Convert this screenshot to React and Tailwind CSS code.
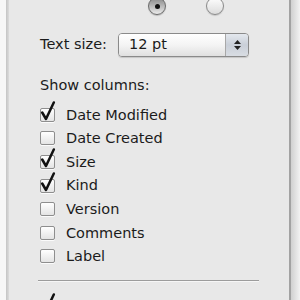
import React from "react";

const font = { fontFamily: '"DejaVu Sans", "Liberation Sans", sans-serif' };

function Check({ checked }) {
  return (
    <div className="relative w-[15px] h-[14px] shrink-0">
      <div className="absolute inset-0 rounded-[2px] border border-[#8e8e8e] bg-gradient-to-b from-[#ffffff] to-[#e4e4e4] shadow-[0_1px_0_rgba(255,255,255,0.8)]" />
      {checked && (
        <svg className="absolute left-[0px] top-[-7px]" width="18" height="22" viewBox="0 0 18 22">
          <path d="M2.2 11.5 L6 18 L13.8 1.5" fill="none" stroke="#111" strokeWidth="2.5" strokeLinejoin="round" strokeLinecap="round" />
        </svg>
      )}
    </div>
  );
}

function Row({ checked, label }) {
  return (
    <div className="flex items-center h-[23.6px] gap-[11px]">
      <Check checked={checked} />
      <span className="text-[14.5px] text-[#1b1b1b] leading-none">{label}</span>
    </div>
  );
}

export default function App() {
  const rows = [
    [true, "Date Modified"],
    [false, "Date Created"],
    [true, "Size"],
    [true, "Kind"],
    [false, "Version"],
    [false, "Comments"],
    [false, "Label"],
  ];
  return (
    <div className="w-[300px] h-[300px] overflow-hidden flex bg-[#f6f6f6]" style={font}>
      <div className="w-[6px] shrink-0 bg-[#f7f7f7]" />
      <div className="w-[3px] shrink-0 bg-gradient-to-r from-[#c4c4c4] to-[#dcdcdc]" />
      <div className="flex-1 bg-[#e8e8e8] flex flex-col pl-[31px] pr-[20px]">
        <div className="flex h-[18px] mt-[-3px] shrink-0">
          <div className="ml-[108px] w-[18px] h-[18px] rounded-full border border-[#6a6a6a] bg-gradient-to-b from-[#8a8a8a] via-[#b8b8b8] to-[#ececec] flex items-center justify-center shadow-[0_1px_1px_rgba(0,0,0,0.2)]">
            <div className="w-[5px] h-[5px] rounded-full bg-[#111]" />
          </div>
          <div className="ml-[40px] w-[18px] h-[18px] rounded-full border border-[#8a8a8a] bg-gradient-to-b from-[#fdfdfd] to-[#dcdcdc] shadow-[0_1px_1px_rgba(0,0,0,0.15)]" />
        </div>
        <div className="flex items-center mt-[18px] h-[24px] shrink-0">
          <span className="text-[14.5px] text-[#1b1b1b] w-[78px]">Text size:</span>
          <div className="flex h-[24px] w-[131px] rounded-[4px] border border-[#8a8a8a] overflow-hidden shadow-[0_1px_1px_rgba(0,0,0,0.15)]">
            <div className="flex-1 bg-gradient-to-b from-[#ffffff] via-[#f4f4f4] to-[#e0e0e0] flex items-center pl-[10px] text-[14.5px] text-[#1b1b1b]">12 pt</div>
            <div className="w-[23px] border-l border-[#a8a8a8] bg-gradient-to-b from-[#e4e8ee] via-[#c9cfd8] to-[#d9dde3] flex flex-col items-center justify-center gap-[2px]">
              <svg width="7" height="4" viewBox="0 0 7 4"><path d="M0 4 L3.5 0 L7 4 Z" fill="#222" /></svg>
              <svg width="7" height="4" viewBox="0 0 7 4"><path d="M0 0 L3.5 4 L7 0 Z" fill="#222" /></svg>
            </div>
          </div>
        </div>
        <div className="mt-[19px] h-[20px] flex items-center text-[14.5px] text-[#1b1b1b] shrink-0">Show columns:</div>
        <div className="mt-[7px] flex flex-col shrink-0">
          {rows.map(([c, l]) => (
            <Row key={l} checked={c} label={l} />
          ))}
        </div>
        <div className="mt-[12px] mr-[10px] ml-[-2px] h-[2px] border-t border-[#9c9c9c] border-b-[1px] border-b-[#f6f6f6] shrink-0" />
        <div className="mt-[18px] flex shrink-0">
          <Check checked={true} />
        </div>
      </div>
      <div className="w-[2px] shrink-0 bg-[#a2a2a2]" />
      <div className="w-[9px] shrink-0 bg-gradient-to-r from-[#d0d0d0] to-[#f2f2f2]" />
    </div>
  );
}
